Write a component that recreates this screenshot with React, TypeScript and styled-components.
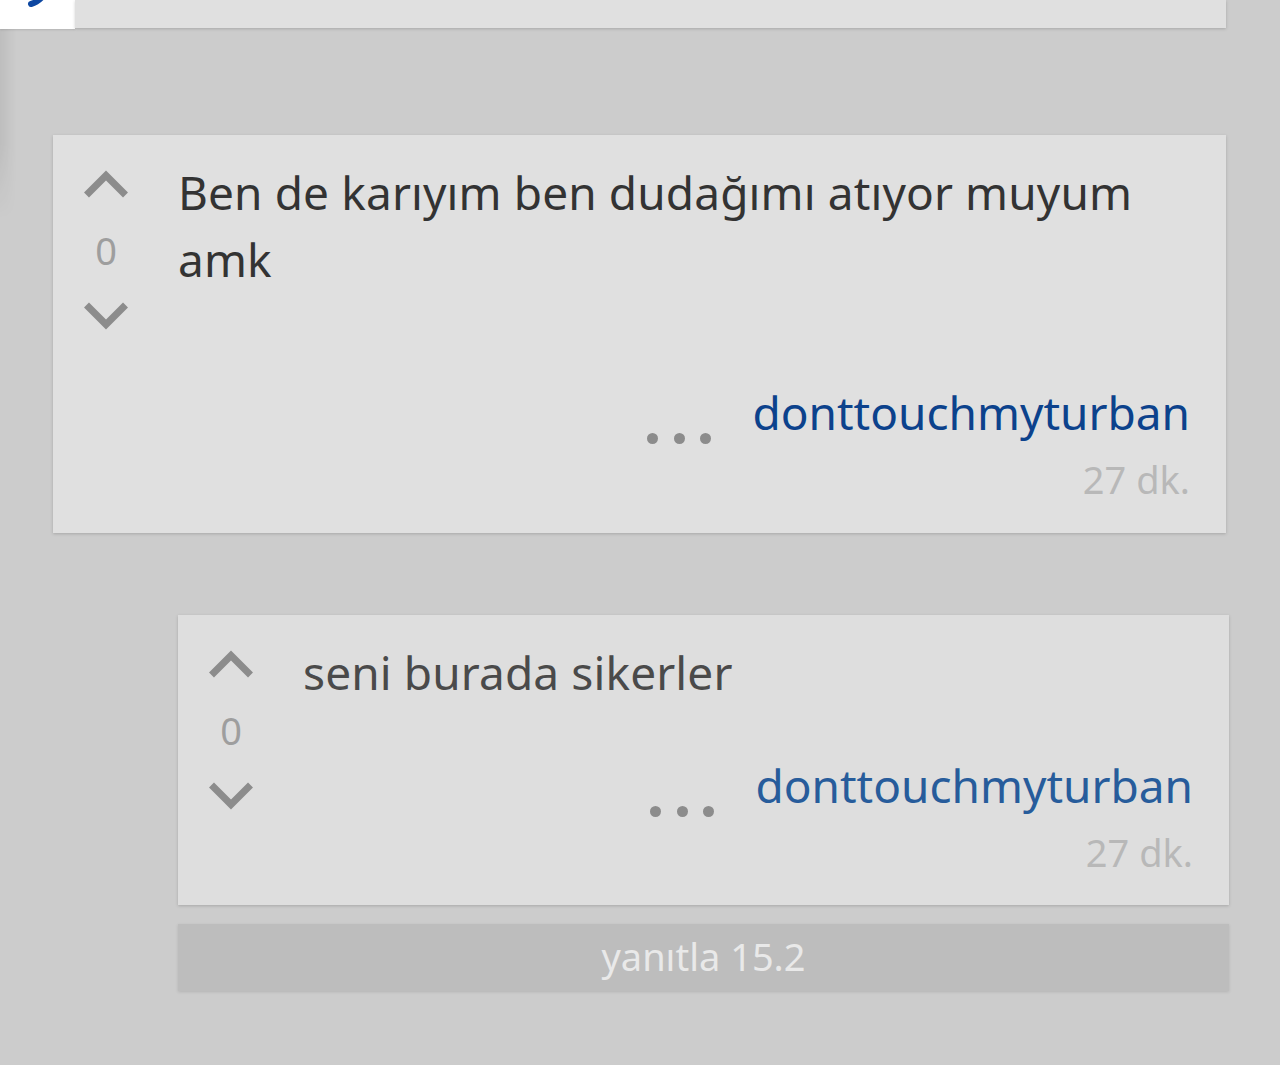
import React from "react";
import styled, { createGlobalStyle } from "styled-components";

const Global = createGlobalStyle`
  html, body { margin: 0; padding: 0; }
  body {
    background: #cccccc;
    font-family: "Noto Sans", "Open Sans", sans-serif;
    overflow: hidden;
  }
`;

const Page = styled.div`
  position: relative;
  width: 1280px;
  height: 1065px;
  background: #cccccc;
  overflow: hidden;
`;

const EdgeShade = styled.div`
  position: absolute;
  left: 0;
  top: 29px;
  width: 16px;
  height: 190px;
  background: linear-gradient(to right, rgba(0, 0, 0, 0.07), rgba(0, 0, 0, 0));
  -webkit-mask-image: linear-gradient(to bottom, #000 60%, transparent);
  mask-image: linear-gradient(to bottom, #000 60%, transparent);
`;

const TopRow = styled.div`
  display: flex;
  align-items: flex-start;
  height: 29px;
`;

const Tile = styled.div`
  width: 75px;
  height: 29px;
  background: #ffffff;
  flex: none;
  box-shadow: 0 1px 2px rgba(0, 0, 0, 0.12);
`;

const TopCard = styled.div`
  flex: none;
  width: 1151px;
  height: 28px;
  background: #e0e0e0;
  box-shadow: 0 1px 3px rgba(0, 0, 0, 0.18);
`;

const Stack = styled.div`
  display: flex;
  flex-direction: column;
`;

const Card = styled.div<{ $left: number; $width: number; $top: number; $bg: string; $pb: number }>`
  margin-left: ${(p) => p.$left}px;
  margin-top: ${(p) => p.$top}px;
  width: ${(p) => p.$width}px;
  background: ${(p) => p.$bg};
  box-shadow: 0 1px 3px rgba(0, 0, 0, 0.18);
  display: flex;
  align-items: flex-start;
  padding: 0 36px ${(p) => p.$pb}px 0;
  box-sizing: border-box;
`;

const VoteCol = styled.div`
  width: 106px;
  flex: none;
  display: flex;
  flex-direction: column;
  align-items: center;
  padding-top: 35px;
`;

const Chevron = styled.svg`
  display: block;
  width: 44px;
  height: 28px;
`;

const Score = styled.div`
  font-size: 38px;
  line-height: 46px;
  color: #9e9e9e;
  margin: 29px 0 29px;
`;

const Content = styled.div`
  flex: 1;
  min-width: 0;
  margin-left: 19px;
  padding-top: 24px;
  display: flex;
  flex-direction: column;
`;

const Body = styled.div<{ $color: string }>`
  font-size: 46px;
  line-height: 67px;
  letter-spacing: 0.12px;
  color: ${(p) => p.$color};
`;

const Footer = styled.div<{ $gap: number }>`
  margin-top: ${(p) => p.$gap}px;
  display: flex;
  flex-direction: column;
  align-items: flex-end;
`;

const AuthorRow = styled.div`
  display: flex;
  align-items: flex-end;
  gap: 41px;
`;

const Dots = styled.div`
  display: flex;
  gap: 15.5px;
  margin-bottom: -1px;
`;

const Dot = styled.span`
  width: 11px;
  height: 11px;
  border-radius: 50%;
  background: #8c8c8c;
`;

const Author = styled.span<{ $color: string }>`
  font-size: 46px;
  line-height: 62px;
  color: ${(p) => p.$color};
`;

const Time = styled.span`
  margin-top: 11px;
  font-size: 38px;
  line-height: 50px;
  color: #b8b8b8;
`;

const ReplyButton = styled.div`
  margin-left: 178px;
  margin-top: 19px;
  width: 1051px;
  height: 67px;
  background: #bdbdbd;
  box-shadow: 0 1px 3px rgba(0, 0, 0, 0.12);
  display: flex;
  align-items: center;
  justify-content: center;
  font-size: 38px;
  color: #e9e9e9;
  padding-bottom: 4px;
  box-sizing: border-box;
`;

const Up = () => (
  <Chevron viewBox="0 0 44 28">
    <path d="M2.5 25 L22 5.5 L41.5 25" fill="none" stroke="#8c8c8c" strokeWidth="7" />
  </Chevron>
);

const Down = () => (
  <Chevron viewBox="0 0 44 28">
    <path d="M2.5 3 L22 22.5 L41.5 3" fill="none" stroke="#8c8c8c" strokeWidth="7" />
  </Chevron>
);

type CommentProps = {
  left: number;
  width: number;
  top: number;
  bg: string;
  text: string;
  textColor: string;
  authorColor: string;
  footerGap: number;
  pb: number;
};

const Comment = ({ left, width, top, bg, text, textColor, authorColor, footerGap, pb }: CommentProps) => (
  <Card $left={left} $width={width} $top={top} $bg={bg} $pb={pb}>
    <VoteCol>
      <Up />
      <Score>0</Score>
      <Down />
    </VoteCol>
    <Content>
      <Body $color={textColor}>{text}</Body>
      <Footer $gap={footerGap}>
        <AuthorRow>
          <Dots>
            <Dot />
            <Dot />
            <Dot />
          </Dots>
          <Author $color={authorColor}>donttouchmyturban</Author>
        </AuthorRow>
        <Time>27 dk.</Time>
      </Footer>
    </Content>
  </Card>
);

export default function App() {
  return (
    <Page>
      <Global />
      <Stack>
        <TopRow>
          <Tile>
            <svg width="75" height="29" viewBox="0 0 75 29">
              <path d="M43 -4 Q38 2 31 4" fill="none" stroke="#0d47a1" strokeWidth="6" strokeLinecap="round" />
            </svg>
          </Tile>
          <TopCard />
        </TopRow>
        <Comment
          left={53}
          width={1173}
          top={106}
          bg="#e0e0e0"
          text="Ben de karıyım ben dudağımı atıyor muyum amk"
          textColor="#333333"
          authorColor="#0c428c"
          footerGap={88}
          pb={29}
        />
        <Comment
          left={178}
          width={1051}
          top={82}
          bg="#dedede"
          text="seni burada sikerler"
          textColor="#4a4a4a"
          authorColor="#275c9b"
          footerGap={48}
          pb={28}
        />
        <ReplyButton>yanıtla 15.2</ReplyButton>
      </Stack>
      <EdgeShade />
    </Page>
  );
}
